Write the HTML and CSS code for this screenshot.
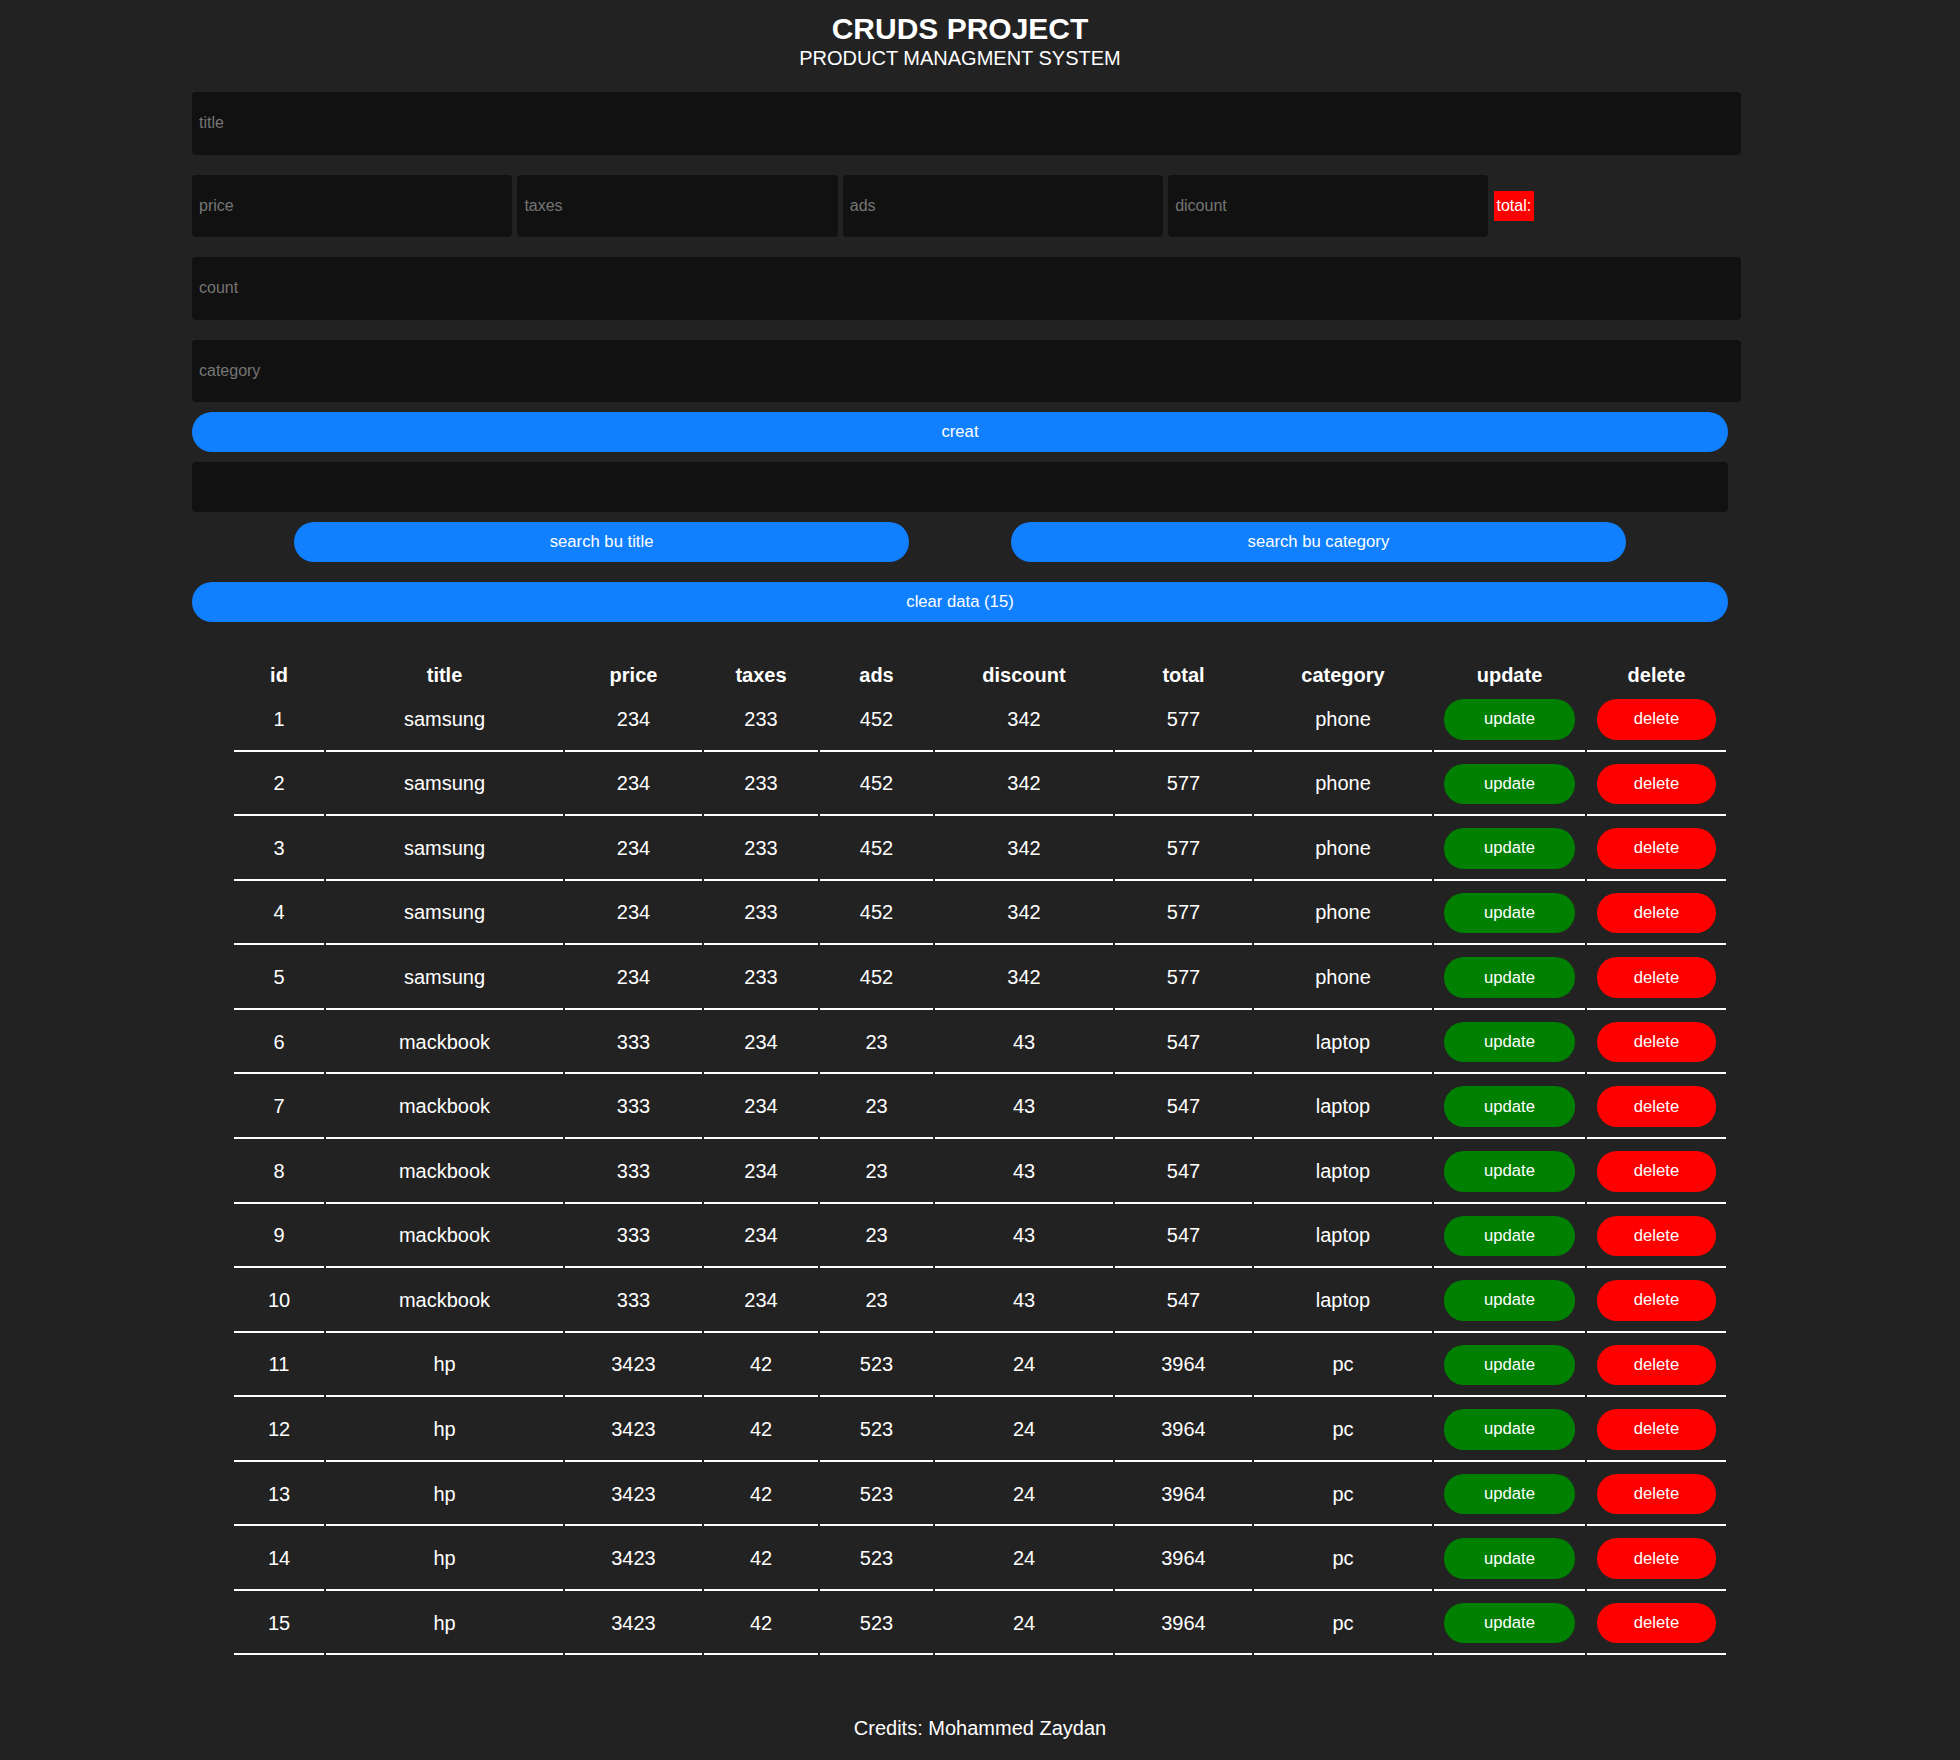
FILE: index.html
```html
<!DOCTYPE html>
<html lang="en">
<head>
<meta charset="UTF-8">
<title>CRUDS</title>
<link rel="stylesheet" href="styles.css">
</head>
<body>
<div class="crud">
  <div class="head">
    <h2>CRUDS PROJECT</h2>
    <p>PRODUCT MANAGMENT SYSTEM</p>
  </div>

  <div class="inputs">
    <input type="text" class="field" placeholder="title">
    <div class="price">
      <input type="number" class="field small" placeholder="price">
      <input type="number" class="field small" placeholder="taxes">
      <input type="number" class="field small" placeholder="ads">
      <input type="number" class="field small" placeholder="dicount">
      <small class="total">total:</small>
    </div>
    <input type="number" class="field" placeholder="count">
    <input type="text" class="field" placeholder="category">
  </div>

  <div class="actions">
    <button class="btn">creat</button>
    <input type="text" class="search-input">
    <div class="btn-search">
      <button class="btn half">search bu title</button>
      <button class="btn half">search bu category</button>
    </div>
  </div>

  <div class="clear">
    <button class="btn">clear data (15)</button>
  </div>

  <table class="products">
    <colgroup>
      <col class="c-id"><col class="c-title"><col class="c-price"><col class="c-taxes"><col class="c-ads">
      <col class="c-discount"><col class="c-total"><col class="c-category"><col class="c-update"><col class="c-delete">
    </colgroup>
    <thead>
      <tr><th>id</th><th>title</th><th>price</th><th>taxes</th><th>ads</th><th>discount</th><th>total</th><th>category</th><th>update</th><th>delete</th></tr>
    </thead>
    <tbody>
      <tr><td>1</td><td>samsung</td><td>234</td><td>233</td><td>452</td><td>342</td><td>577</td><td>phone</td><td><button class="row-btn upd">update</button></td><td><button class="row-btn del">delete</button></td></tr>
      <tr><td>2</td><td>samsung</td><td>234</td><td>233</td><td>452</td><td>342</td><td>577</td><td>phone</td><td><button class="row-btn upd">update</button></td><td><button class="row-btn del">delete</button></td></tr>
      <tr><td>3</td><td>samsung</td><td>234</td><td>233</td><td>452</td><td>342</td><td>577</td><td>phone</td><td><button class="row-btn upd">update</button></td><td><button class="row-btn del">delete</button></td></tr>
      <tr><td>4</td><td>samsung</td><td>234</td><td>233</td><td>452</td><td>342</td><td>577</td><td>phone</td><td><button class="row-btn upd">update</button></td><td><button class="row-btn del">delete</button></td></tr>
      <tr><td>5</td><td>samsung</td><td>234</td><td>233</td><td>452</td><td>342</td><td>577</td><td>phone</td><td><button class="row-btn upd">update</button></td><td><button class="row-btn del">delete</button></td></tr>
      <tr><td>6</td><td>mackbook</td><td>333</td><td>234</td><td>23</td><td>43</td><td>547</td><td>laptop</td><td><button class="row-btn upd">update</button></td><td><button class="row-btn del">delete</button></td></tr>
      <tr><td>7</td><td>mackbook</td><td>333</td><td>234</td><td>23</td><td>43</td><td>547</td><td>laptop</td><td><button class="row-btn upd">update</button></td><td><button class="row-btn del">delete</button></td></tr>
      <tr><td>8</td><td>mackbook</td><td>333</td><td>234</td><td>23</td><td>43</td><td>547</td><td>laptop</td><td><button class="row-btn upd">update</button></td><td><button class="row-btn del">delete</button></td></tr>
      <tr><td>9</td><td>mackbook</td><td>333</td><td>234</td><td>23</td><td>43</td><td>547</td><td>laptop</td><td><button class="row-btn upd">update</button></td><td><button class="row-btn del">delete</button></td></tr>
      <tr><td>10</td><td>mackbook</td><td>333</td><td>234</td><td>23</td><td>43</td><td>547</td><td>laptop</td><td><button class="row-btn upd">update</button></td><td><button class="row-btn del">delete</button></td></tr>
      <tr><td>11</td><td>hp</td><td>3423</td><td>42</td><td>523</td><td>24</td><td>3964</td><td>pc</td><td><button class="row-btn upd">update</button></td><td><button class="row-btn del">delete</button></td></tr>
      <tr><td>12</td><td>hp</td><td>3423</td><td>42</td><td>523</td><td>24</td><td>3964</td><td>pc</td><td><button class="row-btn upd">update</button></td><td><button class="row-btn del">delete</button></td></tr>
      <tr><td>13</td><td>hp</td><td>3423</td><td>42</td><td>523</td><td>24</td><td>3964</td><td>pc</td><td><button class="row-btn upd">update</button></td><td><button class="row-btn del">delete</button></td></tr>
      <tr><td>14</td><td>hp</td><td>3423</td><td>42</td><td>523</td><td>24</td><td>3964</td><td>pc</td><td><button class="row-btn upd">update</button></td><td><button class="row-btn del">delete</button></td></tr>
      <tr><td>15</td><td>hp</td><td>3423</td><td>42</td><td>523</td><td>24</td><td>3964</td><td>pc</td><td><button class="row-btn upd">update</button></td><td><button class="row-btn del">delete</button></td></tr>
    </tbody>
  </table>
</div>

<footer class="credits">Credits: Mohammed Zaydan</footer>
</body>
</html>
```

FILE: styles.css
```css
* {
  margin: 0;
  padding: 0;
  box-sizing: border-box;
}

body {
  background: #222222;
  color: #ffffff;
  font-family: "Liberation Sans", Arial, sans-serif;
}

.crud {
  width: 1536px;
  margin-left: 192px;
}

.head {
  text-align: center;
  padding-top: 12px;
}

.head h2 {
  font-size: 30px;
  font-weight: bold;
  line-height: 34.5px;
}

.head p {
  font-size: 20px;
  line-height: 23px;
}

.inputs {
  display: flex;
  flex-direction: column;
  gap: 20px;
  margin-top: 22.5px;
}

.field {
  display: block;
  width: calc(100% + 13px);
  height: 62.5px;
  background: #111111;
  border: none;
  outline: none;
  border-radius: 4px;
  padding: 0 7px;
  color: #ffffff;
  font-family: "Liberation Sans", Arial, sans-serif;
  font-size: 16px;
}

.field::placeholder {
  color: #757575;
}

input[type="number"]::-webkit-outer-spin-button,
input[type="number"]::-webkit-inner-spin-button {
  -webkit-appearance: none;
  margin: 0;
}

.price {
  display: flex;
  align-items: center;
  gap: 5.2px;
}

.field.small {
  width: calc(20% + 13px);
  flex-shrink: 0;
}

.total {
  background: #ff0000;
  color: #ffffff;
  font-size: 16px;
  line-height: 18.5px;
  padding: 6px 3px;
}

.actions {
  display: flex;
  flex-direction: column;
  gap: 10px;
  margin-top: 10px;
}

.btn {
  display: block;
  width: 100%;
  height: 40px;
  border: none;
  border-radius: 20px;
  background: #1080ff;
  color: #ffffff;
  font-family: "Liberation Sans", Arial, sans-serif;
  font-size: 16.67px;
  cursor: pointer;
}

.search-input {
  display: block;
  width: 100%;
  height: 50px;
  background: #111111;
  border: none;
  outline: none;
  border-radius: 4px;
  padding: 0 7px;
  color: #ffffff;
  font-size: 16px;
}

.btn-search {
  display: flex;
  justify-content: space-evenly;
}

.btn.half {
  width: 40%;
}

.clear {
  margin-top: 20px;
}

.products {
  width: 1496px;
  margin: 40px 0 0 40px;
  table-layout: fixed;
  border-collapse: separate;
  border-spacing: 2px;
  text-align: center;
  font-size: 20px;
}

.c-id { width: 90px; }
.c-title { width: 237px; }
.c-price { width: 137px; }
.c-taxes { width: 114px; }
.c-ads { width: 113px; }
.c-discount { width: 178px; }
.c-total { width: 137px; }
.c-category { width: 178px; }
.c-update { width: 151px; }
.c-delete { width: 139px; }

.products th {
  font-weight: bold;
  padding: 0;
  height: 23px;
  line-height: 23px;
}

.products td {
  padding: 10px;
  border-bottom: 2px solid #ffffff;
  vertical-align: middle;
  line-height: 23px;
}

.row-btn {
  display: block;
  width: 100%;
  height: 40.57px;
  border: none;
  border-radius: 20px;
  color: #ffffff;
  font-family: "Liberation Sans", Arial, sans-serif;
  font-size: 16.67px;
  cursor: pointer;
}

.row-btn.upd {
  background: #008000;
}

.row-btn.del {
  background: #ff0000;
}

.credits {
  text-align: center;
  font-size: 20px;
  line-height: 23px;
  margin-top: 59.5px;
}
```
